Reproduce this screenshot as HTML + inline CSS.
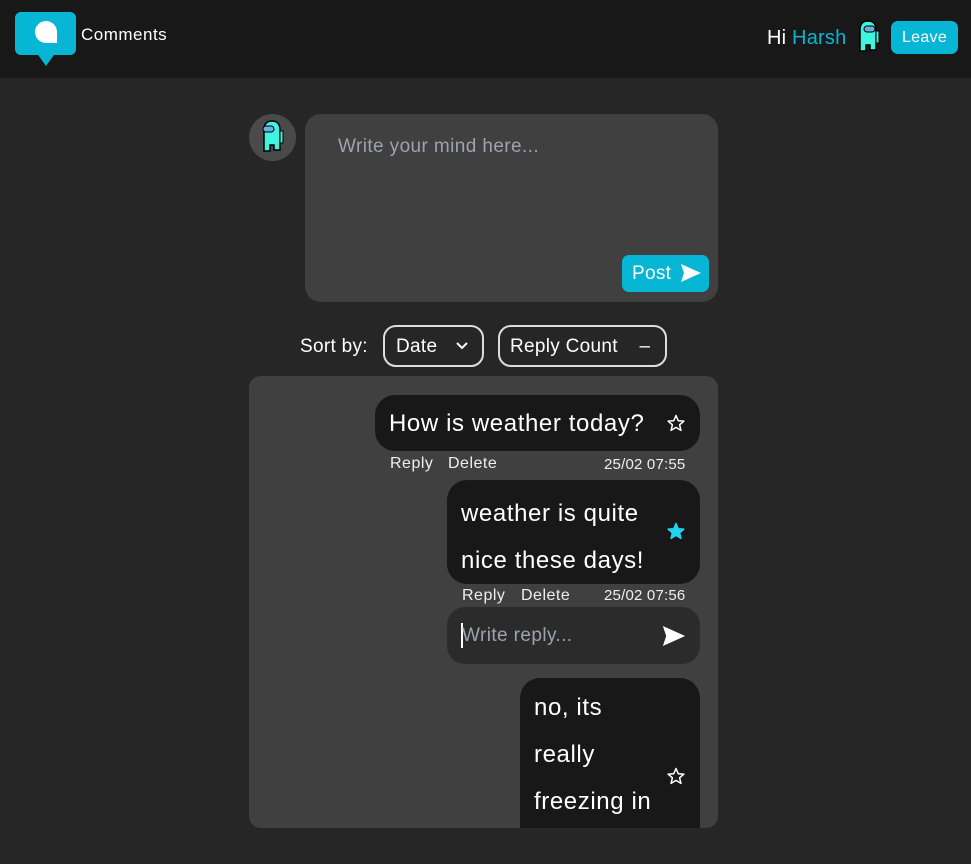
<!DOCTYPE html>
<html><head><meta charset="utf-8"><style>
*{margin:0;padding:0;box-sizing:border-box}
body{width:971px;height:864px;background:#262626;font-family:"Liberation Sans",sans-serif;color:#fff;position:relative;overflow:hidden;letter-spacing:0.3px}
.a{position:absolute}
.hdr{left:0;top:0;width:971px;height:78px;background:#181818}
.bub{background:#181818;border-radius:20px;font-size:24px;letter-spacing:0.6px}
.meta{font-size:16px;color:#eee;letter-spacing:0.5px}
</style></head><body>
<div class="a hdr"></div>
<div class="a" style="left:15px;top:12px;width:61px;height:43px;background:#06b6d4;border-radius:6px"></div>
<div class="a" style="left:36px;top:52px;width:0;height:0;border-left:10px solid transparent;border-right:10px solid transparent;border-top:14px solid #06b6d4"></div>
<div class="a" style="left:35px;top:21px;width:22px;height:22px;background:#fff;border-radius:50% 50% 0 50%"></div>
<div class="a" style="left:81px;top:25px;font-size:17px;letter-spacing:0.5px">Comments</div>
<div class="a" style="left:767px;top:27px;font-size:20px;letter-spacing:0.2px">Hi <span style="color:#06b6d4">Harsh</span></div>
<svg class="a" style="left:856px;top:20px" width="24" height="33" viewBox="0 0 24 33"><path d="M4 10 Q4 1 12 1 Q20 1 20 10 L20 30 L14 30 L14 25 L10 25 L10 31 L4 31 Z" fill="#3ff5e0" stroke="#000" stroke-width="1.5"/><rect x="20" y="11" width="3" height="12" fill="#3ff5e0" stroke="#000"/><rect x="8" y="6" width="11" height="6" rx="3" fill="#6ab0d8" stroke="#000"/></svg>
<div class="a" style="left:891px;top:21px;width:67px;height:33px;background:#06b6d4;border-radius:7px;font-size:16px;text-align:center;line-height:33px">Leave</div>

<div class="a" style="left:249px;top:114px;width:47px;height:47px;border-radius:50%;background:#4a4a4a"></div>
<svg class="a" style="left:260px;top:119px" width="24" height="35" viewBox="0 0 24 33"><path d="M4 10 Q4 1 12 1 Q20 1 20 10 L20 30 L14 30 L14 25 L10 25 L10 31 L4 31 Z" fill="#3ff5e0" stroke="#000" stroke-width="1.5"/><rect x="20" y="11" width="3" height="12" fill="#3ff5e0" stroke="#000"/><rect x="3" y="6" width="11" height="6" rx="3" fill="#6ab0d8" stroke="#000"/></svg>
<div class="a" style="left:305px;top:114px;width:413px;height:188px;background:#404040;border-radius:16px"></div>
<div class="a" style="left:338px;top:136px;font-size:19px;color:#9ca3af;letter-spacing:0.4px">Write your mind here...</div>
<div class="a" style="left:622px;top:255px;width:87px;height:37px;background:#06b6d4;border-radius:7px;font-size:19px;line-height:37px;padding-left:10px">Post</div>
<svg class="a" style="left:681px;top:264px" width="20" height="18" viewBox="0 0 20 18"><path d="M0 0 L20 9 L0 18 L3 9 Z" fill="#fff"/></svg>

<div class="a" style="left:300px;top:336px;font-size:19px">Sort by:</div>
<div class="a" style="left:383px;top:325px;width:101px;height:42px;border:2px solid #ddd;border-radius:13px;font-size:19px;line-height:40px;padding-left:11px">Date</div>
<svg class="a" style="left:455px;top:341px" width="14" height="10"><path d="M2 2 L7 7 L12 2" stroke="#fff" stroke-width="2" fill="none"/></svg>
<div class="a" style="left:498px;top:325px;width:169px;height:42px;border:2px solid #ddd;border-radius:13px;font-size:19px;line-height:40px;padding-left:10px">Reply Count <span style="margin-left:16px">–</span></div>

<div class="a" style="left:249px;top:376px;width:469px;height:452px;background:#404040;border-radius:12px;overflow:hidden">
 <div class="a bub" style="left:126px;top:19px;width:325px;height:56px;line-height:58px;padding-left:14px">How is weather today?</div>
 <svg class="a" style="left:418px;top:38px" width="18" height="18" viewBox="0 0 24 24"><path d="M12 2 L15 9 L22.5 9.5 L16.8 14.4 L18.6 21.8 L12 17.8 L5.4 21.8 L7.2 14.4 L1.5 9.5 L9 9 Z" fill="none" stroke="#fff" stroke-width="2" stroke-linejoin="round"/></svg>
 <div class="a meta" style="left:141px;top:79px">Reply</div>
 <div class="a meta" style="left:199px;top:79px">Delete</div>
 <div class="a meta" style="left:355px;top:80px;font-size:15px;letter-spacing:0.2px">25/02 07:55</div>
 <div class="a bub" style="left:198px;top:104px;width:253px;height:104px;padding:10px 14px;line-height:47px">weather is quite<br>nice these days!</div>
 <svg class="a" style="left:418px;top:146px" width="18" height="18" viewBox="0 0 24 24"><path d="M12 2 L15 9 L22.5 9.5 L16.8 14.4 L18.6 21.8 L12 17.8 L5.4 21.8 L7.2 14.4 L1.5 9.5 L9 9 Z" fill="#22d3ee" stroke="#22d3ee" stroke-width="2" stroke-linejoin="round"/></svg>
 <div class="a meta" style="left:213px;top:211px">Reply</div>
 <div class="a meta" style="left:272px;top:211px">Delete</div>
 <div class="a meta" style="left:355px;top:211px;font-size:15px;letter-spacing:0.2px">25/02 07:56</div>
 <div class="a" style="left:198px;top:231px;width:253px;height:57px;background:#2b2b2b;border-radius:18px"></div>
 <div class="a" style="left:212px;top:247px;width:2px;height:25px;background:#fff"></div>
 <div class="a" style="left:213px;top:249px;font-size:19px;color:#9ca3af;letter-spacing:0.4px">Write reply...</div>
 <svg class="a" style="left:413px;top:250px" width="24" height="20" viewBox="0 0 20 18"><path d="M0 0 L20 9 L0 18 L3 9 Z" fill="#fff"/></svg>
 <div class="a bub" style="left:271px;top:302px;width:180px;height:200px;padding:6px 14px;line-height:47px">no, its<br>really<br>freezing in</div>
 <svg class="a" style="left:418px;top:391px" width="18" height="18" viewBox="0 0 24 24"><path d="M12 2 L15 9 L22.5 9.5 L16.8 14.4 L18.6 21.8 L12 17.8 L5.4 21.8 L7.2 14.4 L1.5 9.5 L9 9 Z" fill="none" stroke="#fff" stroke-width="2" stroke-linejoin="round"/></svg>
</div>
</body></html>
